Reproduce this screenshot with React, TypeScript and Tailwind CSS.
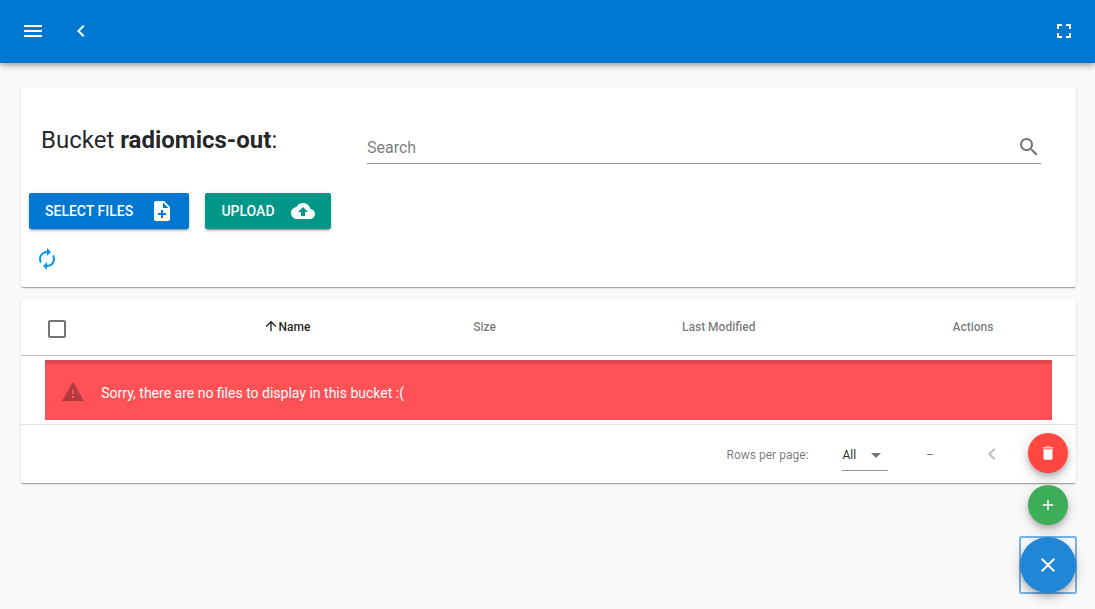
import React from "react";

type IconProps = { d: string; size?: number; className?: string; children?: React.ReactNode };

const Icon = ({ d, size = 24, className = "", children }: IconProps) => (
  <svg width={size} height={size} viewBox="0 0 24 24" fill="currentColor" className={`block shrink-0 ${className}`}>
    <path d={d} />
    {children}
  </svg>
);

const paths = {
  menu: "M3 18h18v-2H3v2zm0-5h18v-2H3v2zm0-7v2h18V6H3z",
  chevronLeft: "M15.41 7.41L14 6l-6 6 6 6 1.41-1.41L10.83 12z",
  fullscreen: "M7 14H5v5h5v-2H7v-3zm-2-4h2V7h3V5H5v5zm12 7h-3v2h5v-5h-2v3zM14 5v2h3v3h2V5h-5z",
  search:
    "M15.5 14h-.79l-.28-.27C15.41 12.59 16 11.11 16 9.5 16 5.91 13.09 3 9.5 3S3 5.91 3 9.5 5.91 16 9.5 16c1.61 0 3.09-.59 4.23-1.57l.27.28v.79l5 4.99L20.49 19l-4.99-5zm-6 0C7.01 14 5 11.99 5 9.5S7.01 5 9.5 5 14 7.01 14 9.5 11.99 14 9.5 14z",
  noteAdd:
    "M14 2H6c-1.1 0-1.99.9-1.99 2L4 20c0 1.1.89 2 1.99 2H18c1.1 0 2-.9 2-2V8l-6-6zm2 14h-3v3h-2v-3H8v-2h3v-3h2v3h3v2zm-3-7V3.5L18.5 9H13z",
  cloudUpload:
    "M19.35 10.04C18.67 6.59 15.64 4 12 4 9.11 4 6.6 5.64 5.35 8.04 2.34 8.36 0 10.91 0 14c0 3.31 2.69 6 6 6h13c2.76 0 5-2.24 5-5 0-2.64-2.05-4.78-4.65-4.96zM14 13v4h-4v-4H7l5-5 5 5h-3z",
  autorenew:
    "M12 6v3l4-4-4-4v3c-4.42 0-8 3.58-8 8 0 1.57.46 3.03 1.24 4.26L6.7 14.8c-.45-.83-.7-1.79-.7-2.8 0-3.31 2.69-6 6-6zm6.76 1.74L17.3 9.2c.44.84.7 1.79.7 2.8 0 3.31-2.69 6-6 6v-3l-4 4 4 4v-3c4.42 0 8-3.58 8-8 0-1.57-.46-3.03-1.24-4.26z",
  checkbox: "M19 5v14H5V5h14m0-2H5c-1.1 0-2 .9-2 2v14c0 1.1.9 2 2 2h14c1.1 0 2-.9 2-2V5c0-1.1-.9-2-2-2z",
  arrowUp: "M4 12l1.41 1.41L11 7.83V20h2V7.83l5.58 5.59L20 12l-8-8-8 8z",
  warning: "M1 21h22L12 2 1 21zm12-3h-2v-2h2v2zm0-4h-2v-4h2v4z",
  dropDown: "M7 10l5 5 5-5z",
  trash: "M6 19c0 1.1.9 2 2 2h8c1.1 0 2-.9 2-2V7H6v12z",
  trashLid: "M19 4h-3.5l-1-1h-5l-1 1H5v2h14V4z",
  add: "M19 13h-6v6h-2v-6H5v-2h6V5h2v6h6v2z",
  close:
    "M19 6.41L17.59 5 12 10.59 6.41 5 5 6.41 10.59 12 5 17.59 6.41 19 12 13.41 17.59 19 19 17.59 13.41 12z",
};

const cardShadow =
  "shadow-[0_2px_1px_-1px_rgba(0,0,0,0.2),0_1px_1px_0_rgba(0,0,0,0.14),0_1px_3px_0_rgba(0,0,0,0.12)]";
const buttonShadow =
  "shadow-[0_3px_1px_-2px_rgba(0,0,0,0.2),0_2px_2px_0_rgba(0,0,0,0.14),0_1px_5px_0_rgba(0,0,0,0.12)]";
const fabShadow =
  "shadow-[0_3px_5px_-1px_rgba(0,0,0,0.2),0_6px_10px_0_rgba(0,0,0,0.14),0_1px_18px_0_rgba(0,0,0,0.12)]";

function Toolbar() {
  return (
    <header className="relative flex h-[63px] items-center bg-[#0077d0] px-[21px] pb-px text-white shadow-[0_2px_4px_-1px_rgba(0,0,0,0.2),0_4px_5px_0_rgba(0,0,0,0.14),0_1px_10px_0_rgba(0,0,0,0.12)]">
      <button><Icon d={paths.menu} /></button>
      <button className="ml-6"><Icon d={paths.chevronLeft} /></button>
      <button className="mr-[-2px] ml-auto"><Icon d={paths.fullscreen} /></button>
    </header>
  );
}

function BucketCard() {
  return (
    <section className={`flex h-[200px] flex-col rounded-[2px] bg-white ${cardShadow}`}>
      <div className="flex h-[106px] pr-[35px] pl-5">
        <h1 className="w-[326px] shrink-0 pt-[37px] text-2xl leading-8 font-normal">
          Bucket <strong className="font-bold">radiomics-out</strong>:
        </h1>
        <div className="mt-11 flex h-[33px] flex-1 items-center border-b border-[#949494] text-base text-black/54">
          <span className="flex-1 pt-0.5">Search</span>
          <Icon d={paths.search} />
        </div>
      </div>
      <div className="flex gap-4 pl-2 text-sm font-medium text-white">
        <button className={`flex h-9 w-40 items-center justify-between rounded-[2px] bg-[#0077d0] pr-[15.5px] pl-4 ${buttonShadow}`}>
          SELECT FILES
          <Icon d={paths.noteAdd} />
        </button>
        <button className={`flex h-9 w-[126px] items-center justify-between rounded-[2px] bg-[#009688] pr-4 pl-[16.4px] ${buttonShadow}`}>
          UPLOAD
          <Icon d={paths.cloudUpload} />
        </button>
      </div>
      <button className="mt-[18px] ml-3.5 w-6 text-[#0598f5]"><Icon d={paths.autorenew} /></button>
    </section>
  );
}

function FilesTable() {
  return (
    <section className={`mt-3 h-[184px] rounded-[2px] bg-white ${cardShadow}`}>
      <div className="flex h-[57px] items-center border-b border-[#c2c2c2] text-xs font-medium text-black/54">
        <div className="w-[241.5px] pt-1 pl-6"><Icon d={paths.checkbox} /></div>
        <div className="flex w-[210.75px] items-center text-black/87">
          <Icon d={paths.arrowUp} size={16} className="mb-0.5" />Name
        </div>
        <div className="w-[208.75px]">Size</div>
        <div className="w-[270.5px]">Last Modified</div>
        <div>Actions</div>
      </div>
      <div className="h-[69px] border-b border-[#e0e0e0] px-6 pt-1">
        <div className="flex h-[60px] items-center border-t-4 border-[#e0484d] bg-[#ff5257] px-4 text-sm text-white">
          <Icon d={paths.warning} className="text-[#b33a3d]" />
          <span className="ml-[16.3px] pt-0.5">Sorry, there are no files to display in this bucket :(</span>
        </div>
      </div>
      <div className="flex h-[58px] items-center pl-[705.6px] text-xs text-black/54">
        <span className="w-[115.4px] pt-0.5">Rows per page:</span>
        <div className="mt-0.5 flex h-8 w-[46px] items-center justify-between border-b border-[#949494]">
          <span className="pl-[0.5px] text-black/87">All</span>
          <Icon d={paths.dropDown} />
        </div>
        <span className="w-[72px] pt-0.5 pl-[38px]">–</span>
        <Icon d={paths.chevronLeft} className="ml-5 text-black/26" />
      </div>
    </section>
  );
}

function SpeedDial() {
  return (
    <div className="fixed right-[19px] bottom-4 flex w-14 flex-col items-center gap-3 text-white">
      <button className={`grid size-10 place-items-center rounded-full bg-[#ff4742] ${fabShadow}`}>
        <Icon d={paths.trash} size={18}><path d={paths.trashLid} opacity="0.65" /></Icon>
      </button>
      <button className={`grid size-10 place-items-center rounded-full bg-[#3dad5a] ${fabShadow}`}>
        <Icon d={paths.add} size={18} />
      </button>
      <div className="size-14 rounded-[1px] outline-2 outline-offset-[-1px] outline-[#7ab4ea]">
        <button className={`relative z-10 grid size-14 place-items-center rounded-full bg-[#2086d5] ${fabShadow}`}>
          <Icon d={paths.close} />
        </button>
      </div>
    </div>
  );
}

export default function App() {
  return (
    <div className="h-[609px] overflow-hidden bg-[#fafafa] font-[Roboto,sans-serif] text-black/87">
      <Toolbar />
      <main className="px-[21px] pt-6 pr-[19px]">
        <BucketCard />
        <FilesTable />
      </main>
      <SpeedDial />
    </div>
  );
}
